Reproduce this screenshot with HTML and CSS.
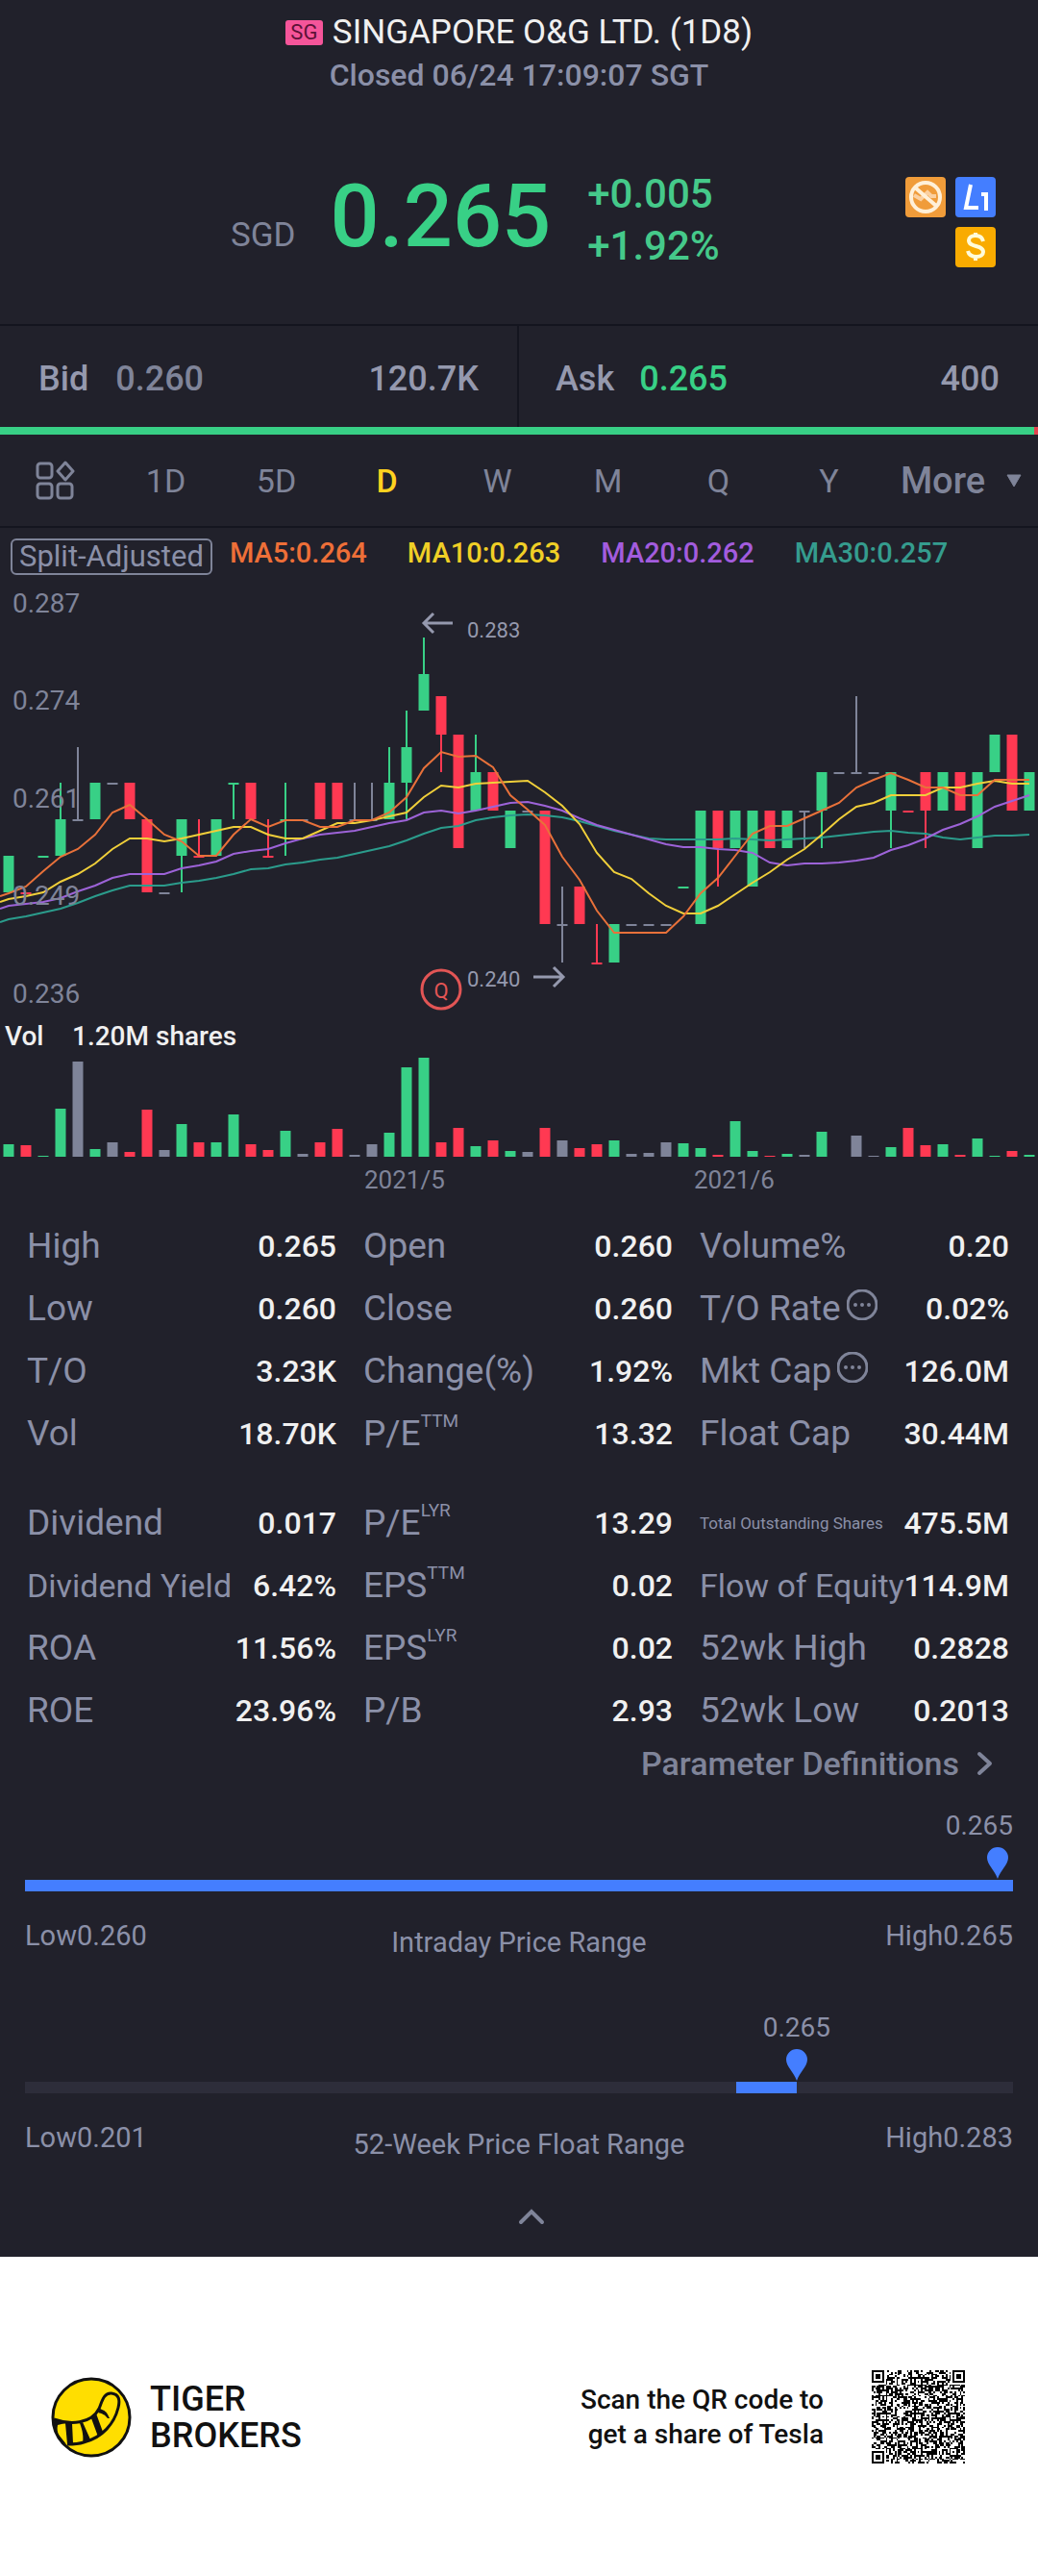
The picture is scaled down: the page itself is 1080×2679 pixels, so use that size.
FILE: index.html
```html
<!DOCTYPE html>
<html lang="en">

<head>
    <meta charset="UTF-8" />
    <meta name="viewport" content="width=device-width, initial-scale=1.0" />
    <title>SINGAPORE O&amp;G LTD. (1D8)</title>
    <link rel="stylesheet" href="styles.css">
</head>

<body>

    <main class="stock">
        <header class="stock-header">
            <h1><span class="market">SG</span>SINGAPORE O&amp;G LTD. (1D8)</h1>
            <p class="status">Closed 06/24 17:09:07 SGT</p>
        </header>

        <section class="quote">
            <div class="price">
                <span class="currency">SGD</span>
                <span class="last">0.265</span>
            </div>
            <div class="change">
                <div>+0.005</div>
                <div>+1.92%</div>
            </div>
            <div class="badges">
                <svg viewBox="0 0 42 42">
                    <rect width="42" height="42" rx="4" fill="#f09c3a" />
                    <path d="M9 19l7 4 7-7 4 4 5 0" fill="none" stroke="#fbd0a0" stroke-width="4" />
                    <circle cx="21" cy="21" r="15" fill="none" stroke="#fff0d8" stroke-width="4" />
                    <path d="M10 11l22 19" stroke="#fff0d8" stroke-width="4" />
                </svg>
                <svg viewBox="0 0 42 42">
                    <rect width="42" height="42" rx="4" fill="#447eff" />
                    <path d="M16 8L11 32H24M27 18h5v17" fill="none" stroke="#fff" stroke-width="4" />
                </svg>
                <svg class="badge-last" viewBox="0 0 42 42">
                    <rect width="42" height="42" rx="4" fill="#f9ab00" />
                    <path d="M29 15c-1-4-4-6-8-6-4 0-7 2-7 5 0 8 15 4 15 12 0 3-3 5-7 5-5 0-8-2-9-6M21 6v4M21 31v4" fill="none" stroke="#fffbd9" stroke-width="4" />
                </svg>
            </div>
        </section>

        <section class="depth">
            <div class="depth-side bid">
                <span class="depth-label">Bid</span>
                <span>0.260</span>
                <span class="depth-size">120.7K</span>
            </div>
            <div class="depth-side ask">
                <span class="depth-label">Ask</span>
                <span class="up">0.265</span>
                <span class="depth-size">400</span>
            </div>
        </section>
        <div class="depth-bar"></div>

        <nav class="periods">
            <button aria-label="Indicators">
                <svg width="42" height="42" viewBox="0 0 42 42" fill="none" stroke="#7f8499" stroke-width="3">
                    <rect x="2" y="3" width="15" height="15" rx="3" />
                    <rect x="2" y="24" width="15" height="15" rx="3" />
                    <rect x="23" y="24" width="15" height="15" rx="3" />
                    <path d="M31 2l8 9-8 9-8-9z" stroke-linejoin="round" />
                </svg>
            </button>
            <button>1D</button>
            <button>5D</button>
            <button class="active">D</button>
            <button>W</button>
            <button>M</button>
            <button>Q</button>
            <button>Y</button>
            <button class="more">More
                <svg width="16" height="14" viewBox="0 0 16 14"><path d="M1 1h14L8 13z" fill="#7f8499" stroke="#7f8499" stroke-linejoin="round" /></svg>
            </button>
        </nav>

        <section class="chart">
            <div class="legend">
                <button class="split">Split-Adjusted</button>
                <span class="ma5">MA5:0.264</span>
                <span class="ma10">MA10:0.263</span>
                <span class="ma20">MA20:0.262</span>
                <span class="ma30">MA30:0.257</span>
            </div>
            <svg class="plot" viewBox="0 0 1080 663">
                <g id="candles"></g>
                <g id="averages"></g>
                <g class="axis">
                    <text x="13" y="37">0.287</text>
                    <text x="13" y="138">0.274</text>
                    <text x="13" y="240">0.261</text>
                    <text x="13" y="341">0.249</text>
                    <text x="13" y="443">0.236</text>
                    <text class="date" x="379" y="636">2021/5</text>
                    <text class="date" x="722" y="636">2021/6</text>
                </g>
                <g class="marks">
                    <path d="M471 48H442M451 38L441 48l10 10M555 416h30M576 406l10 10-10 10" />
                    <text x="486" y="63">0.283</text>
                    <text x="486" y="426">0.240</text>
                </g>
                <g class="quarter">
                    <circle cx="459" cy="429" r="20" />
                    <text x="459" y="438">Q</text>
                </g>
                <g class="vol-title">
                    <text x="5" y="487">Vol</text>
                    <text x="75" y="487">1.20M shares</text>
                </g>
                <g id="volume"></g>
            </svg>
        </section>

        <table class="stats">
            <tbody>
                <tr>
                    <th>High</th><td>0.265</td>
                    <th>Open</th><td>0.260</td>
                    <th>Volume%</th><td>0.20</td>
                </tr>
                <tr>
                    <th>Low</th><td>0.260</td>
                    <th>Close</th><td>0.260</td>
                    <th>T/O Rate<svg class="info" viewBox="0 0 32 32"><circle cx="16" cy="16" r="15" /><path d="M9 16h0M16 16h0M23 16h0" /></svg></th><td>0.02%</td>
                </tr>
                <tr>
                    <th>T/O</th><td>3.23K</td>
                    <th>Change(%)</th><td>1.92%</td>
                    <th>Mkt Cap<svg class="info" viewBox="0 0 32 32"><circle cx="16" cy="16" r="15" /><path d="M9 16h0M16 16h0M23 16h0" /></svg></th><td>126.0M</td>
                </tr>
                <tr>
                    <th>Vol</th><td>18.70K</td>
                    <th>P/E<sup>TTM</sup></th><td>13.32</td>
                    <th>Float Cap</th><td>30.44M</td>
                </tr>
            </tbody>
            <tbody>
                <tr>
                    <th>Dividend</th><td>0.017</td>
                    <th>P/E<sup>LYR</sup></th><td>13.29</td>
                    <th class="tiny">Total Outstanding Shares</th><td>475.5M</td>
                </tr>
                <tr>
                    <th class="small">Dividend Yield</th><td>6.42%</td>
                    <th>EPS<sup>TTM</sup></th><td>0.02</td>
                    <th class="small">Flow of Equity</th><td>114.9M</td>
                </tr>
                <tr>
                    <th>ROA</th><td>11.56%</td>
                    <th>EPS<sup>LYR</sup></th><td>0.02</td>
                    <th>52wk High</th><td>0.2828</td>
                </tr>
                <tr>
                    <th>ROE</th><td>23.96%</td>
                    <th>P/B</th><td>2.93</td>
                    <th>52wk Low</th><td>0.2013</td>
                </tr>
            </tbody>
        </table>

        <a class="definitions" href="#">Parameter Definitions
            <svg width="18" height="26" viewBox="0 0 18 26"><path d="M3 3l11 10L3 23" fill="none" stroke="#7f8499" stroke-width="4" stroke-linecap="round" stroke-linejoin="round" /></svg>
        </a>

        <section class="range">
            <div class="track">
                <div class="fill" style="left: 0; width: 100%"></div>
                <span class="range-value at-end">0.265</span>
                <svg class="pin" style="left: 98.4%" viewBox="0 0 24 33"><path d="M12 33C9 24 1 18 1 11a11 11 0 0 1 22 0c0 7-8 13-11 22z" /></svg>
            </div>
            <div class="range-labels">
                <span>Low0.260</span>
                <span class="range-name">Intraday Price Range</span>
                <span class="range-high">High0.265</span>
            </div>
        </section>

        <section class="range">
            <div class="track">
                <div class="fill" style="left: 72%; width: 6.1%"></div>
                <span class="range-value" style="left: 78.1%">0.265</span>
                <svg class="pin" style="left: 78.1%" viewBox="0 0 24 33"><path d="M12 33C9 24 1 18 1 11a11 11 0 0 1 22 0c0 7-8 13-11 22z" /></svg>
            </div>
            <div class="range-labels">
                <span>Low0.201</span>
                <span class="range-name">52-Week Price Float Range</span>
                <span class="range-high">High0.283</span>
            </div>
        </section>

        <button class="collapse" aria-label="Collapse">
            <svg width="28" height="18" viewBox="0 0 28 18"><path d="M3 15L14 4l11 11" fill="none" stroke="#7f8499" stroke-width="4" stroke-linecap="round" /></svg>
        </button>
    </main>

    <footer class="share">
        <svg class="logo" viewBox="0 0 84 84">
            <circle cx="42" cy="42" r="40" fill="#ffde00" stroke="#111" stroke-width="3" />
            <path d="M3 44C20 50 42 49 50 33c3-7 5-17 13-16 8 1 9 7 7 15-4 16-16 31-36 36-6 2-12 2-17 2" fill="none" stroke="#111" stroke-width="3" />
            <path d="M3 44l12 4-8 2c-1 4 0 8 1 10l8 10C8 66 4 56 3 44z" fill="#111" />
            <path d="M15 48l7 0 1 21-6 1zM30 48l3-1 8 18-8 4c1-7 0-13-3-21zM42 43l5-5 7 19-5 5zM51 33c5 2 7 3 9 8l1 2-2 0c-3-4-6-5-10-6z" fill="#111" />
        </svg>
        <div class="brand">TIGER<br>BROKERS</div>
        <p class="invite">Scan the QR code to<br>get a share of Tesla</p>
        <svg class="qr" id="qr" viewBox="0 0 53 53" shape-rendering="crispEdges"></svg>
    </footer>

    <script>
        const STEP = 18;
        const BAR = 11;
        const COLORS = { g: "#38d086", r: "#ff3952", n: "#7f8499" };

        // [color, body top, body bottom, wick top, wick bottom]
        const candles = [
            ["g", 290, 328], ["r", 328, 328], ["g", 290, 290], ["g", 252, 290, 214, 290], ["n", 252, 252, 177, 252],
            ["g", 214, 252], ["n", 214, 214], ["r", 214, 252], ["r", 252, 328], ["n", 328, 328],
            ["g", 252, 290, 252, 328], ["r", 290, 290, 252, 290], ["g", 252, 290], ["g", 214, 214, 214, 252], ["r", 214, 252],
            ["r", 290, 290, 252, 290], ["g", 252, 252, 214, 290], ["n", 252, 252], ["r", 214, 252], ["r", 214, 252],
            ["n", 252, 252, 214, 252], ["n", 252, 252, 214, 252], ["g", 214, 252, 177, 252], ["g", 177, 214, 139, 252], ["g", 101, 139, 63, 139],
            ["r", 124, 164, 124, 203], ["r", 164, 282], ["g", 203, 243, 164, 243], ["r", 203, 243], ["g", 243, 282],
            ["n", 243, 243], ["r", 243, 361], ["n", 361, 361, 322, 401], ["r", 322, 361], ["r", 401, 401, 361, 401],
            ["g", 361, 401], ["n", 361, 361], ["n", 361, 361], ["n", 361, 361], ["g", 322, 322],
            ["g", 243, 361], ["r", 243, 282, 243, 322], ["g", 243, 282], ["g", 243, 322], ["r", 243, 282],
            ["g", 243, 282], ["n", 243, 243, 243, 282], ["g", 203, 243, 203, 282], ["n", 203, 203], ["n", 203, 203, 124, 203],
            ["n", 203, 203], ["g", 203, 243, 203, 282], ["r", 243, 243], ["r", 203, 243, 203, 282], ["g", 203, 243],
            ["r", 203, 243], ["g", 203, 282], ["g", 164, 203], ["r", 164, 243], ["g", 203, 243]
        ];

        const volumes = [
            ["g", 13], ["r", 12], ["g", 1], ["g", 50], ["n", 99], ["g", 8], ["n", 15], ["r", 5], ["r", 49], ["n", 7],
            ["g", 34], ["r", 15], ["g", 15], ["g", 44], ["r", 13], ["r", 7], ["g", 27], ["n", 3], ["r", 15], ["r", 29],
            ["n", 2], ["n", 13], ["g", 25], ["g", 93], ["g", 103], ["r", 15], ["r", 30], ["g", 11], ["r", 17], ["g", 6],
            ["n", 5], ["r", 30], ["n", 17], ["r", 9], ["r", 13], ["g", 17], ["n", 3], ["n", 4], ["n", 15], ["g", 14],
            ["g", 9], ["r", 2], ["g", 37], ["g", 6], ["r", 1], ["g", 3], ["n", 2], ["g", 26], ["n", 0], ["n", 22],
            ["n", 1], ["g", 10], ["r", 30], ["r", 12], ["g", 13], ["r", 2], ["g", 19], ["g", 1], ["r", 6], ["g", 2]
        ];

        const averages = [
            ["#2b9c8c", [356, 353, 349, 345, 339, 332, 326, 321, 321, 321, 318, 316, 313, 309, 304, 303, 299, 297, 294, 292, 288, 284, 280, 274, 267, 261, 259, 253, 250, 248, 247, 248, 250, 254, 259, 264, 268, 272, 273, 273, 273, 273, 272, 273, 274, 273, 272, 271, 269, 267, 265, 264, 266, 267, 271, 273, 271, 269, 269, 268]],
            ["#9d63d8", [342, 340, 338, 334, 327, 321, 313, 309, 309, 309, 303, 300, 296, 288, 285, 283, 277, 272, 268, 266, 264, 260, 256, 253, 245, 243, 246, 243, 239, 235, 234, 238, 243, 251, 258, 263, 268, 273, 278, 281, 281, 283, 284, 287, 297, 300, 298, 298, 297, 295, 292, 284, 279, 272, 263, 257, 249, 239, 233, 227]],
            ["#f0cf3a", [335, 332, 328, 317, 309, 298, 283, 272, 272, 275, 272, 268, 264, 260, 260, 268, 272, 272, 264, 256, 256, 253, 249, 245, 229, 217, 219, 215, 214, 213, 212, 224, 238, 257, 287, 307, 314, 329, 342, 350, 350, 342, 330, 318, 307, 294, 283, 268, 252, 239, 235, 227, 227, 227, 219, 219, 215, 212, 215, 215]],
            ["#e8713a", [329, 322, 306, 291, 283, 268, 245, 237, 252, 268, 275, 290, 290, 268, 252, 260, 253, 253, 260, 260, 253, 253, 245, 229, 199, 182, 187, 186, 198, 227, 242, 258, 291, 315, 347, 370, 370, 370, 370, 353, 329, 313, 290, 267, 259, 259, 251, 243, 235, 219, 211, 204, 211, 219, 219, 227, 227, 211, 211, 211]]
        ];

        const center = i => STEP / 2 + i * STEP;

        function rect(x, y, w, h, color) {
            return `<rect x="${x}" y="${y}" width="${w}" height="${h}" fill="${color}"/>`;
        }

        // Candles, dojis are drawn as a short dash
        document.getElementById("candles").innerHTML = candles.map(([c, top, bottom, high, low], i) => {
            let out = rect(center(i) - BAR / 2, top, BAR, Math.max(bottom - top, 2), COLORS[c]);
            if (high !== undefined) {
                out += rect(center(i) - 1, high, 2, low - high, COLORS[c]);
            }
            return out;
        }).join("");

        // Moving averages, extended to the left edge
        document.getElementById("averages").innerHTML = averages.map(([color, ys]) => {
            const points = [`0,${ys[0] + 3}`].concat(ys.map((y, i) => `${center(i)},${y}`));
            return `<polyline points="${points.join(" ")}" stroke="${color}"/>`;
        }).join("");

        document.getElementById("volume").innerHTML = volumes.map(([c, h], i) =>
            rect(center(i) - BAR / 2, 603 - h, BAR, h, COLORS[c])
        ).join("");

        // QR code
        const SIZE = 53;
        const grid = [];
        let seed = 1408;
        for (let y = 0; y < SIZE; y++) {
            grid.push([]);
            for (let x = 0; x < SIZE; x++) {
                seed = (seed * 16807) % 2147483647;
                grid[y].push(seed % 100 < 50);
            }
        }

        function square(cx, cy, radius, isDark) {
            for (let dy = -radius; dy <= radius; dy++) {
                for (let dx = -radius; dx <= radius; dx++) {
                    const row = grid[cy + dy];
                    if (row && cx + dx >= 0 && cx + dx < SIZE) {
                        row[cx + dx] = isDark(Math.max(Math.abs(dx), Math.abs(dy)));
                    }
                }
            }
        }

        [[26, 6], [6, 26], [26, 26], [46, 26], [26, 46], [46, 46]].forEach(([x, y]) => square(x, y, 2, d => d !== 1));
        [[3, 3], [49, 3], [3, 49]].forEach(([x, y]) => square(x, y, 4, d => d < 2 || d === 3));

        document.getElementById("qr").innerHTML = grid.map((row, y) =>
            row.map((dark, x) => dark ? rect(x, y, 1, 1, "#000") : "").join("")
        ).join("");
    </script>

</body>

</html>
```
FILE: styles.css
```css
* {
    box-sizing: border-box;
}

body {
    margin: 0;
    font-family: Roboto, "Liberation Sans", sans-serif;
    background: #fff;
}

h1,
p {
    margin: 0;
}

button {
    padding: 0;
    border: none;
    background: none;
    font-family: inherit;
    color: inherit;
    cursor: pointer;
}

.stock {
    background: #21212b;
    color: #7f8499;
}

.up {
    color: #38d086;
}

/* Header */
.stock-header {
    padding-top: 14px;
    text-align: center;
}

.stock-header h1 {
    display: flex;
    justify-content: center;
    align-items: center;
    gap: 10px;
    font-size: 35px;
    line-height: 40px;
    font-weight: 400;
    color: #f0f0f0;
}

.market {
    width: 39px;
    border-radius: 3px;
    background: #f5559a;
    color: #5e1238;
    font-size: 22px;
    line-height: 26px;
}

.status {
    margin-top: 4px;
    font-size: 32px;
    line-height: 40px;
    font-weight: 500;
    color: #8b90a8;
}

/* Price */
.quote {
    display: flex;
    align-items: flex-start;
    padding: 77px 44px 54px 240px;
}

.price {
    display: flex;
    align-items: baseline;
    gap: 36px;
}

.currency {
    font-size: 35px;
}

.last {
    font-size: 90px;
    line-height: 102px;
    font-weight: 500;
    color: #38d086;
}

.change {
    margin-left: 38px;
    font-size: 42px;
    line-height: 54px;
    font-weight: 500;
    color: #45c98a;
}

.badges {
    display: grid;
    grid-template-columns: 42px 42px;
    gap: 10px;
    margin: 9px 0 0 auto;
}

.badges svg {
    display: block;
}

.badge-last {
    grid-column: 2;
}

/* Bid / ask */
.depth {
    display: flex;
    border-top: 2px solid #14151f;
}

.depth-side {
    display: flex;
    gap: 28px;
    padding: 33px 40px 28px;
    font-size: 36px;
    line-height: 44px;
    font-weight: 500;
}

.bid {
    width: 50%;
    border-right: 2px solid #14151f;
}

.ask {
    flex: 1;
    gap: 26px;
    padding-left: 38px;
}

.depth-label,
.depth-size {
    color: #9599ae;
}

.depth-size {
    margin-left: auto;
}

.depth-bar {
    height: 8px;
    background: #38d086;
    border-right: 4px solid #e2434f;
}

/* Period tabs */
.periods {
    display: flex;
    height: 97px;
    border-bottom: 2px solid #14151f;
}

.periods button {
    flex: 1;
    display: flex;
    justify-content: center;
    align-items: center;
    font-size: 34px;
}

.periods .active {
    color: #ffd21f;
    font-weight: 500;
}

.periods .more {
    flex: 0 0 160px;
    gap: 22px;
    font-size: 38px;
    font-weight: 500;
}

/* Chart */
.legend {
    display: flex;
    align-items: flex-start;
    gap: 42px;
    padding: 11px 11px 2px;
    font-size: 29px;
    line-height: 30px;
    font-weight: 500;
}

.split {
    height: 38px;
    margin-right: -24px;
    padding: 0 7px;
    border: 2px solid #7f8499;
    border-radius: 6px;
    font-size: 31px;
    line-height: 34px;
    color: #8b90a8;
}

.ma5 {
    color: #ee6f38;
}

.ma10 {
    color: #f0cf26;
}

.ma20 {
    color: #a35cde;
}

.ma30 {
    color: #359c8e;
}

.plot {
    display: block;
    width: 100%;
}

.plot text {
    font-size: 28px;
}

.axis {
    fill: #7f8499;
}

.plot .date {
    font-size: 26px;
}

.marks {
    fill: #9599ae;
}

.marks path {
    fill: none;
    stroke: #9599ae;
    stroke-width: 3px;
}

.plot .marks text,
.plot .quarter text {
    font-size: 22px;
}

.quarter {
    fill: #e25555;
    text-anchor: middle;
}

.quarter circle {
    fill: none;
    stroke: #e25555;
    stroke-width: 3px;
}

.vol-title {
    fill: #f0f0f0;
    font-weight: 500;
}

#averages {
    fill: none;
    stroke-width: 2px;
}

/* Stats */
.stats {
    width: calc(100% - 30px);
    table-layout: fixed;
    border-collapse: collapse;
    white-space: nowrap;
}

.stats tbody + tbody::before {
    content: "";
    display: block;
    height: 28px;
}

.stats th,
.stats td {
    height: 65px;
    padding: 0;
    vertical-align: middle;
}

.stats th {
    padding-left: 28px;
    text-align: left;
    font-size: 37px;
    line-height: 44px;
    font-weight: 400;
    color: #8b90a8;
}

.stats th.small {
    font-size: 34px;
}

.stats th.tiny {
    font-size: 17px;
}

.stats td {
    width: 112px;
    text-align: right;
    font-size: 32px;
    font-weight: 500;
    color: #f0f0f0;
}

.stats sup {
    font-size: 19px;
    line-height: 0;
    vertical-align: 19px;
}

.info {
    width: 32px;
    height: 32px;
    margin-left: 6px;
    fill: none;
    stroke: #7f8499;
    stroke-width: 3px;
}

.info path {
    stroke-width: 4px;
    stroke-linecap: round;
}

.definitions {
    display: flex;
    justify-content: flex-end;
    align-items: center;
    gap: 18px;
    height: 46px;
    padding-right: 46px;
    font-size: 34px;
    font-weight: 500;
    color: #7f8499;
    text-decoration: none;
}

/* Ranges */
.range {
    padding: 98px 26px 29px;
    font-size: 29px;
    line-height: 36px;
    color: #8b90a8;
}

.track {
    position: relative;
    height: 12px;
    background: #2d2d3a;
}

.fill {
    position: absolute;
    height: 12px;
    background: #447eff;
}

.range-value {
    position: absolute;
    bottom: 50px;
    font-size: 28px;
    transform: translateX(-50%);
}

.range-value.at-end {
    right: 0;
    transform: none;
}

.pin {
    position: absolute;
    bottom: 13px;
    width: 24px;
    height: 33px;
    margin-left: -12px;
    fill: #447eff;
}

.range-labels {
    display: grid;
    grid-template-columns: 1fr auto 1fr;
    margin-top: 28px;
}

.range-name {
    padding-top: 7px;
}

.range-high {
    text-align: right;
}

.collapse {
    display: flex;
    justify-content: center;
    width: 100%;
    height: 70px;
    padding: 19px 0 0 26px;
}

/* Footer */
.share {
    display: flex;
    align-items: center;
    padding: 118px 76px 118px 53px;
    color: #111;
}

.logo {
    width: 84px;
    height: 84px;
}

.brand {
    margin-left: 19px;
    font-size: 36px;
    line-height: 38px;
    font-weight: 500;
}

.invite {
    margin-left: auto;
    font-size: 28px;
    line-height: 36px;
    font-weight: 500;
    text-align: right;
}

.qr {
    width: 97px;
    height: 97px;
    margin-left: 50px;
}
```
